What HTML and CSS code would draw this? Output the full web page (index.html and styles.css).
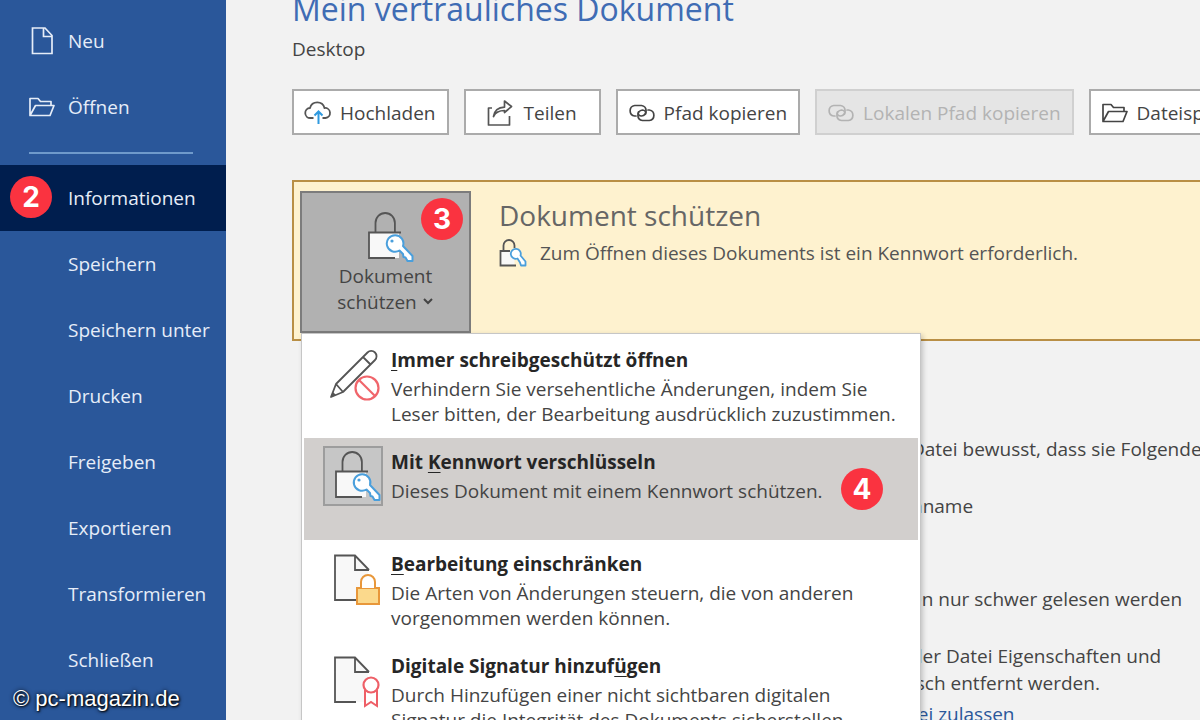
FILE: index.html
```html
<!DOCTYPE html>
<html lang="de">
<head>
    <meta charset="UTF-8">
    <meta name="viewport" content="width=device-width, initial-scale=1.0">
    <title>Mein vertrauliches Dokument</title>
    <link rel="stylesheet" href="styles.css">
</head>
<body>
    <!-- shared icons -->
    <svg class="sprite" aria-hidden="true">
        <symbol id="icon-folder" viewBox="0 0 28 22">
            <path d="M2 19.500V2.500h8l2.500 3h10.500v4M2 19.500l5.500-10h18.500l-4 10z" fill="none" stroke="currentColor" stroke-width="1.700" stroke-linejoin="round"/>
        </symbol>
        <symbol id="icon-link" viewBox="0 0 28 20">
            <g fill="none" stroke="currentColor" stroke-width="1.700" stroke-linecap="round">
                <path d="M8 13H6.700a5.300 5.300 0 0 1 0-10.500h6.800a5.300 5.300 0 0 1 0 10.500c-2.500 0-4-2-3-4"/>
                <path d="M20 7h1.300a5.300 5.300 0 0 1 0 10.500h-6.800a5.300 5.300 0 0 1 0-10.500c2.500 0 4 2 3 4"/>
            </g>
        </symbol>
        <symbol id="icon-lock-key" viewBox="-10 0 58 52">
            <path d="M2 21.500h30v25.500H2z" fill="#f8f8f8"/>
            <path d="M34 21.500H2V47h26M8.500 21.500V12a9.700 10 0 0 1 19.400 0v9.500" fill="none" stroke="#555" stroke-width="1.800"/>
            <path d="M32.500 39.500a8.300 8.300 0 1 1 3.500-4.500l9.500 10v5h-5l-2-3.500-2-.5-.5-3z" fill="#fff" stroke="#4a9fdc" stroke-width="2" stroke-linejoin="round"/>
            <circle cx="25" cy="30" r="1.600" fill="#4a9fdc"/>
        </symbol>
        <symbol id="icon-page" viewBox="0 0 60 60">
            <path d="M12 7.500h19l14 15V52H12z" fill="#f8f8f8"/>
            <path d="M33 52H12V7.500h20l14 14.500M32 7.500V22h14" fill="none" stroke="#555" stroke-width="1.800"/>
        </symbol>
    </svg>

    <nav class="sidebar">
        <a class="nav-item" href="#">
            <svg class="nav-icon" viewBox="0 0 28 28"><path d="M4.500 1h12.500l7 7.500V26.500H4.500zM15.500 1v8.500H24" fill="none" stroke="currentColor" stroke-width="1.700"/></svg>
            <span>Neu</span>
        </a>
        <a class="nav-item" href="#">
            <svg class="nav-icon"><use href="#icon-folder"/></svg>
            <span>Öffnen</span>
        </a>
        <hr>
        <a class="nav-item active" href="#"><span>Informationen</span><b class="badge badge-nav">2</b></a>
        <a class="nav-item" href="#"><span>Speichern</span></a>
        <a class="nav-item" href="#"><span>Speichern unter</span></a>
        <a class="nav-item" href="#"><span>Drucken</span></a>
        <a class="nav-item" href="#"><span>Freigeben</span></a>
        <a class="nav-item" href="#"><span>Exportieren</span></a>
        <a class="nav-item" href="#"><span>Transformieren</span></a>
        <a class="nav-item" href="#"><span>Schließen</span></a>
    </nav>

    <main class="content">
        <h1>Mein vertrauliches Dokument</h1>
        <p class="location">Desktop</p>

        <div class="toolbar">
            <button class="tool">
                <svg class="tool-icon" viewBox="0 0 28 24">
                    <path d="M9.500 17H6.500a5 5 0 0 1-.5-10 7.500 7.500 0 0 1 14.500 0 5 5 0 0 1 1 10h-3" fill="none" stroke="#555" stroke-width="1.800"/>
                    <path d="M14.500 23V11M10.500 14.500l4-4 4 4" fill="none" stroke="#2f9ae0" stroke-width="2"/>
                </svg>
                Hochladen
            </button>
            <button class="tool tool-share">
                <svg class="tool-icon" viewBox="0 0 28 26">
                    <path d="M6 8H2.500v17h21v-9M7.500 16.500c1-6.500 5-9 11-9.300V4L18.500 1l7 5.500-7 6V10.500c-6 0-9 2-11 6z" fill="none" stroke="#555" stroke-width="1.700" stroke-linejoin="round"/>
                </svg>
                Teilen
            </button>
            <button class="tool">
                <svg class="tool-icon"><use href="#icon-link"/></svg>
                Pfad kopieren
            </button>
            <button class="tool" disabled>
                <svg class="tool-icon"><use href="#icon-link"/></svg>
                Lokalen Pfad kopieren
            </button>
            <button class="tool">
                <svg class="tool-icon"><use href="#icon-folder"/></svg>
                Dateispeicherort öffnen
            </button>
        </div>

        <section class="protect">
            <div class="protect-action">
                <button class="protect-button">
                    <svg class="lock-icon"><use href="#icon-lock-key"/></svg>
                    <span>Dokument<br>schützen <svg class="chevron" viewBox="0 0 12 8"><path d="M2 2l4 4 4-4" fill="none" stroke="currentColor" stroke-width="2"/></svg></span>
                </button>
                <b class="badge badge-button">3</b>

                <div class="menu">
                    <button class="menu-item">
                        <svg class="menu-icon" viewBox="0 0 60 60">
                            <path d="M8 53l5-13L44.500 8.500a5 5 0 0 1 7.500 7.500L20 48zM13 40l7 8M40 13l7.500 7.500" fill="#fff" stroke="#555" stroke-width="1.800" stroke-linejoin="round"/>
                            <path d="M8 53l2-5 3 3z" fill="#555"/>
                            <circle cx="44" cy="44" r="11.500" fill="#fff" stroke="#f0656b" stroke-width="2.200"/>
                            <path d="M36 36l16 16" stroke="#f0656b" stroke-width="2.200"/>
                        </svg>
                        <span class="menu-text">
                            <strong><u>I</u>mmer schreibgeschützt öffnen</strong>
                            <span>Verhindern Sie versehentliche Änderungen, indem Sie<br>Leser bitten, der Bearbeitung ausdrücklich zuzustimmen.</span>
                        </span>
                    </button>
                    <button class="menu-item selected">
                        <span class="menu-icon menu-icon-framed"><svg class="lock-icon"><use href="#icon-lock-key"/></svg></span>
                        <span class="menu-text">
                            <strong>Mit <u>K</u>ennwort verschlüsseln</strong>
                            <span>Dieses Dokument mit einem Kennwort schützen.</span>
                        </span>
                        <b class="badge badge-menu">4</b>
                    </button>
                    <button class="menu-item">
                        <svg class="menu-icon" viewBox="0 0 60 60">
                            <use href="#icon-page"/>
                            <path d="M34 40h22v16H34z" fill="#fbd98c" stroke="#e8973a" stroke-width="2"/>
                            <path d="M38 40v-6a7 7 0 0 1 14 0v6" fill="#fff" stroke="#e8973a" stroke-width="2"/>
                        </svg>
                        <span class="menu-text">
                            <strong><u>B</u>earbeitung einschränken</strong>
                            <span>Die Arten von Änderungen steuern, die von anderen<br>vorgenommen werden können.</span>
                        </span>
                    </button>
                    <button class="menu-item">
                        <svg class="menu-icon" viewBox="0 0 60 60">
                            <use href="#icon-page"/>
                            <path d="M42 40v16l6-4 6 4V40" fill="#fff" stroke="#ee5f67" stroke-width="2"/>
                            <circle cx="48" cy="35" r="7.500" fill="#fff" stroke="#ee5f67" stroke-width="2.200"/>
                        </svg>
                        <span class="menu-text">
                            <strong>Digitale Signatur hinzuf<u>ü</u>gen</strong>
                            <span>Durch Hinzufügen einer nicht sichtbaren digitalen<br>Signatur die Integrität des Dokuments sicherstellen.</span>
                        </span>
                    </button>
                </div>
            </div>
            <div class="protect-info">
                <h2>Dokument schützen</h2>
                <p>
                    <svg class="status-icon" viewBox="0 0 28 30">
                        <path d="M1.500 13h14v14.500h-14z" fill="#f8f8f8"/>
                        <path d="M11 13H1.500v14.500H17M4.500 13V7.500a5.500 5.500 0 0 1 11 0V10" fill="none" stroke="#555" stroke-width="1.800"/>
                        <path d="M18.500 20.500a5 5 0 1 1 3-3l5 6v4h-4.500l-1-3z" fill="#fff" stroke="#4a9fdc" stroke-width="1.800" stroke-linejoin="round"/>
                    </svg>
                    Zum Öffnen dieses Dokuments ist ein Kennwort erforderlich.
                </p>
            </div>
        </section>

        <section class="inspect">
            <div class="inspect-group">
                <p>Datei bewusst, dass sie Folgendes enthält:</p>
                <p>nname</p>
            </div>
            <div class="inspect-group">
                <p>en nur schwer gelesen werden</p>
                <p>der Datei Eigenschaften und<br>isch entfernt werden.</p>
                <a href="#">tei zulassen</a>
            </div>
        </section>
    </main>

    <div class="watermark">© pc-magazin.de</div>
</body>
</html>
```
FILE: styles.css
```css
* {
    box-sizing: border-box;
}
body {
    margin: 0;
    height: 100vh;
    display: flex;
    overflow: hidden;
    background: #f2f2f2;
    color: #444;
    font-family: "Open Sans", "Noto Sans", sans-serif;
    font-size: 19px;
    font-weight: 500;
}
button {
    font: inherit;
    color: inherit;
}
h1, h2, p {
    margin: 0;
}
.sprite {
    position: absolute;
    width: 0;
    height: 0;
}

/* sidebar */
.sidebar {
    flex: none;
    width: 226px;
    padding-top: 8px;
    background: #2a579a;
}
.nav-item {
    position: relative;
    display: flex;
    align-items: center;
    height: 66px;
    padding-left: 68px;
    color: #e6edf8;
    text-decoration: none;
}
.nav-item.active {
    background: #001e4e;
}
.nav-icon {
    width: 28px;
    height: 28px;
    margin-left: -40px;
    margin-right: 12px;
}
.sidebar hr {
    width: 164px;
    margin: 12px 0 11px 29px;
    border: 0;
    border-top: 2px solid #6f9acb;
}

/* numbered markers */
.badge {
    position: absolute;
    display: flex;
    align-items: center;
    justify-content: center;
    width: 42px;
    height: 42px;
    border-radius: 50%;
    background: #fa3340;
    color: #fff;
    font-family: Inter, sans-serif;
    font-size: 28px;
    font-weight: 700;
}
.badge-nav {
    left: 10px;
    top: 11px;
}
.badge-button {
    right: 8px;
    top: 7px;
}
.badge-menu {
    right: 35px;
    top: 30px;
}

/* content */
.content {
    flex: 1;
    min-width: 0;
    padding-left: 66px;
    overflow: hidden;
}
h1 {
    margin-top: -16px;
    color: #3f6cb4;
    font-size: 32px;
    font-weight: 400;
    line-height: 50px;
    white-space: nowrap;
}
.location {
    line-height: 30px;
}
.toolbar {
    display: flex;
    gap: 15px;
    margin-top: 25px;
}
.tool {
    flex: none;
    display: flex;
    align-items: center;
    gap: 8px;
    height: 46px;
    padding: 1px 11px 0 10px;
    border: 2px solid #ababab;
    background: #fff;
    white-space: nowrap;
}
.tool-share {
    gap: 10px;
    padding: 1px 22px 0 20px;
}
.tool:disabled {
    border-color: #d0d0d0;
    background: #e5e5e5;
    color: #b3b3b3;
}
.tool-icon {
    width: 28px;
    height: 26px;
}

.protect {
    display: flex;
    height: 161px;
    margin-top: 45px;
    padding: 9px 0 0 6px;
    border: 2px solid #b98f45;
    border-right: 0;
    background: #fef2cf;
}
.protect-action {
    position: relative;
    flex: none;
}
.protect-button {
    display: flex;
    flex-direction: column;
    align-items: center;
    width: 171px;
    height: 142px;
    padding: 18px 0 0;
    border: 2px solid #7c7c7c;
    background: #b1b1b1;
    line-height: 26px;
}
.lock-icon {
    flex: none;
    width: 58px;
    height: 52px;
}
.chevron {
    width: 12px;
    height: 8px;
    vertical-align: 4px;
}
.protect-info {
    padding: 4px 0 0 28px;
    white-space: nowrap;
}
.protect-info h2 {
    color: #666;
    font-size: 28px;
    font-weight: 400;
    line-height: 40px;
}
.protect-info p {
    display: flex;
    align-items: center;
    gap: 13px;
    line-height: 36px;
    color: #555;
}
.status-icon {
    width: 28px;
    height: 30px;
}

/* drop-down menu */
.menu {
    position: absolute;
    z-index: 1;
    top: 142px;
    left: 1px;
    width: 620px;
    padding: 2px;
    border: 1px solid #c6c6c6;
    background: #fff;
    box-shadow: 2px 2px 5px rgba(0, 0, 0, 0.2);
}
.menu-item {
    position: relative;
    display: flex;
    align-items: flex-start;
    gap: 8px;
    width: 100%;
    height: 102px;
    padding: 8px 0 0 19px;
    border: 0;
    background: none;
    text-align: left;
    white-space: nowrap;
}
.menu-item.selected {
    background: #d2cfcd;
}
.menu-icon {
    flex: none;
    width: 60px;
    height: 60px;
}
.menu-icon-framed {
    display: flex;
    align-items: center;
    justify-content: center;
    border: 2px solid #9d9d9d;
    background: #c6c6c6;
}
.menu-text {
    display: flex;
    flex-direction: column;
    gap: 1px;
    line-height: 25px;
}
.menu-text strong {
    color: #262626;
    line-height: 32px;
}
.menu-text u {
    text-underline-offset: 3px;
}

/* document inspection */
.inspect {
    padding: 95px 0 0 619px;
    line-height: 27px;
    white-space: nowrap;
}
.inspect-group {
    margin-bottom: 66px;
}
.inspect-group p + p {
    margin-top: 30px;
}
.inspect a {
    display: block;
    margin-top: 4px;
    color: #2a579a;
    text-decoration: none;
}

.watermark {
    position: absolute;
    left: 13px;
    bottom: 8px;
    color: #fff;
    font-family: "Liberation Sans", Arial, sans-serif;
    font-size: 22px;
    font-weight: 400;
    text-shadow: 0 0 4px #000, 1px 1px 2px #000;
}
```
